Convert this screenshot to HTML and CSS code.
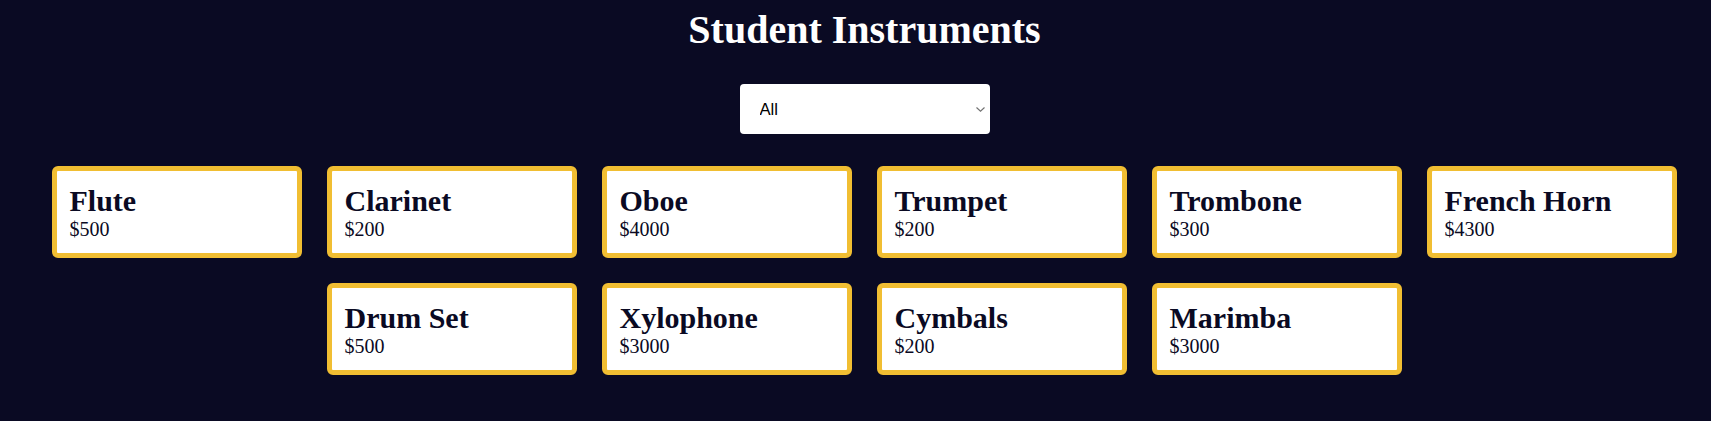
FILE: index.html
```html
<!DOCTYPE html>
<html lang="en">
<head>
<meta charset="utf-8">
<title>Student Instruments</title>
<link rel="stylesheet" href="styles.css">
</head>
<body>
  <h1 class="title">Student Instruments</h1>
  <div class="filter">
    <select class="category">
      <option>All</option>
      <option>Woodwinds</option>
      <option>Brass</option>
      <option>Percussion</option>
    </select>
  </div>
  <div class="products">
    <div class="card"><h2 class="name">Flute</h2><p class="price">$500</p></div>
    <div class="card"><h2 class="name">Clarinet</h2><p class="price">$200</p></div>
    <div class="card"><h2 class="name">Oboe</h2><p class="price">$4000</p></div>
    <div class="card"><h2 class="name">Trumpet</h2><p class="price">$200</p></div>
    <div class="card"><h2 class="name">Trombone</h2><p class="price">$300</p></div>
    <div class="card"><h2 class="name">French Horn</h2><p class="price">$4300</p></div>
    <div class="card"><h2 class="name">Drum Set</h2><p class="price">$500</p></div>
    <div class="card"><h2 class="name">Xylophone</h2><p class="price">$3000</p></div>
    <div class="card"><h2 class="name">Cymbals</h2><p class="price">$200</p></div>
    <div class="card"><h2 class="name">Marimba</h2><p class="price">$3000</p></div>
  </div>
</body>
</html>
```
FILE: styles.css
```css
html, body {
  margin: 0;
  background: #0a0a23;
}
body {
  padding: 6px 0 0 18px;
  font-family: "Liberation Serif", "Times New Roman", serif;
  color: #0a0a23;
}
.title {
  margin: 0;
  font-size: 40px;
  font-weight: bold;
  color: #ffffff;
  text-align: center;
}
.filter {
  display: flex;
  justify-content: center;
  margin-top: 31px;
}
.category {
  -webkit-appearance: none;
  appearance: none;
  width: 250px;
  height: 50px;
  padding: 0 20px 0 20px;
  border: none;
  border-radius: 4px;
  background-color: #ffffff;
  background-image: url("data:image/svg+xml;utf8,<svg xmlns='http://www.w3.org/2000/svg' width='9' height='5' viewBox='0 0 9 5'><path d='M0.5 0.5 L4.5 4.2 L8.5 0.5' fill='none' stroke='%23707070' stroke-width='1.1'/></svg>");
  background-repeat: no-repeat;
  background-position: right 5px center;
  color: #000000;
  font-family: "Liberation Sans", Arial, sans-serif;
  font-size: 16.67px;
}
.products {
  display: flex;
  flex-wrap: wrap;
  justify-content: center;
  gap: 25px;
  margin-top: 32px;
}
.card {
  box-sizing: border-box;
  width: 250px;
  padding: 12.5px;
  background: #ffffff;
  border: 5px solid #f1be32;
  border-radius: 6px;
}
.name {
  margin: 0;
  font-size: 30px;
  font-weight: bold;
}
.price {
  margin: 0;
  font-size: 20px;
}
```
